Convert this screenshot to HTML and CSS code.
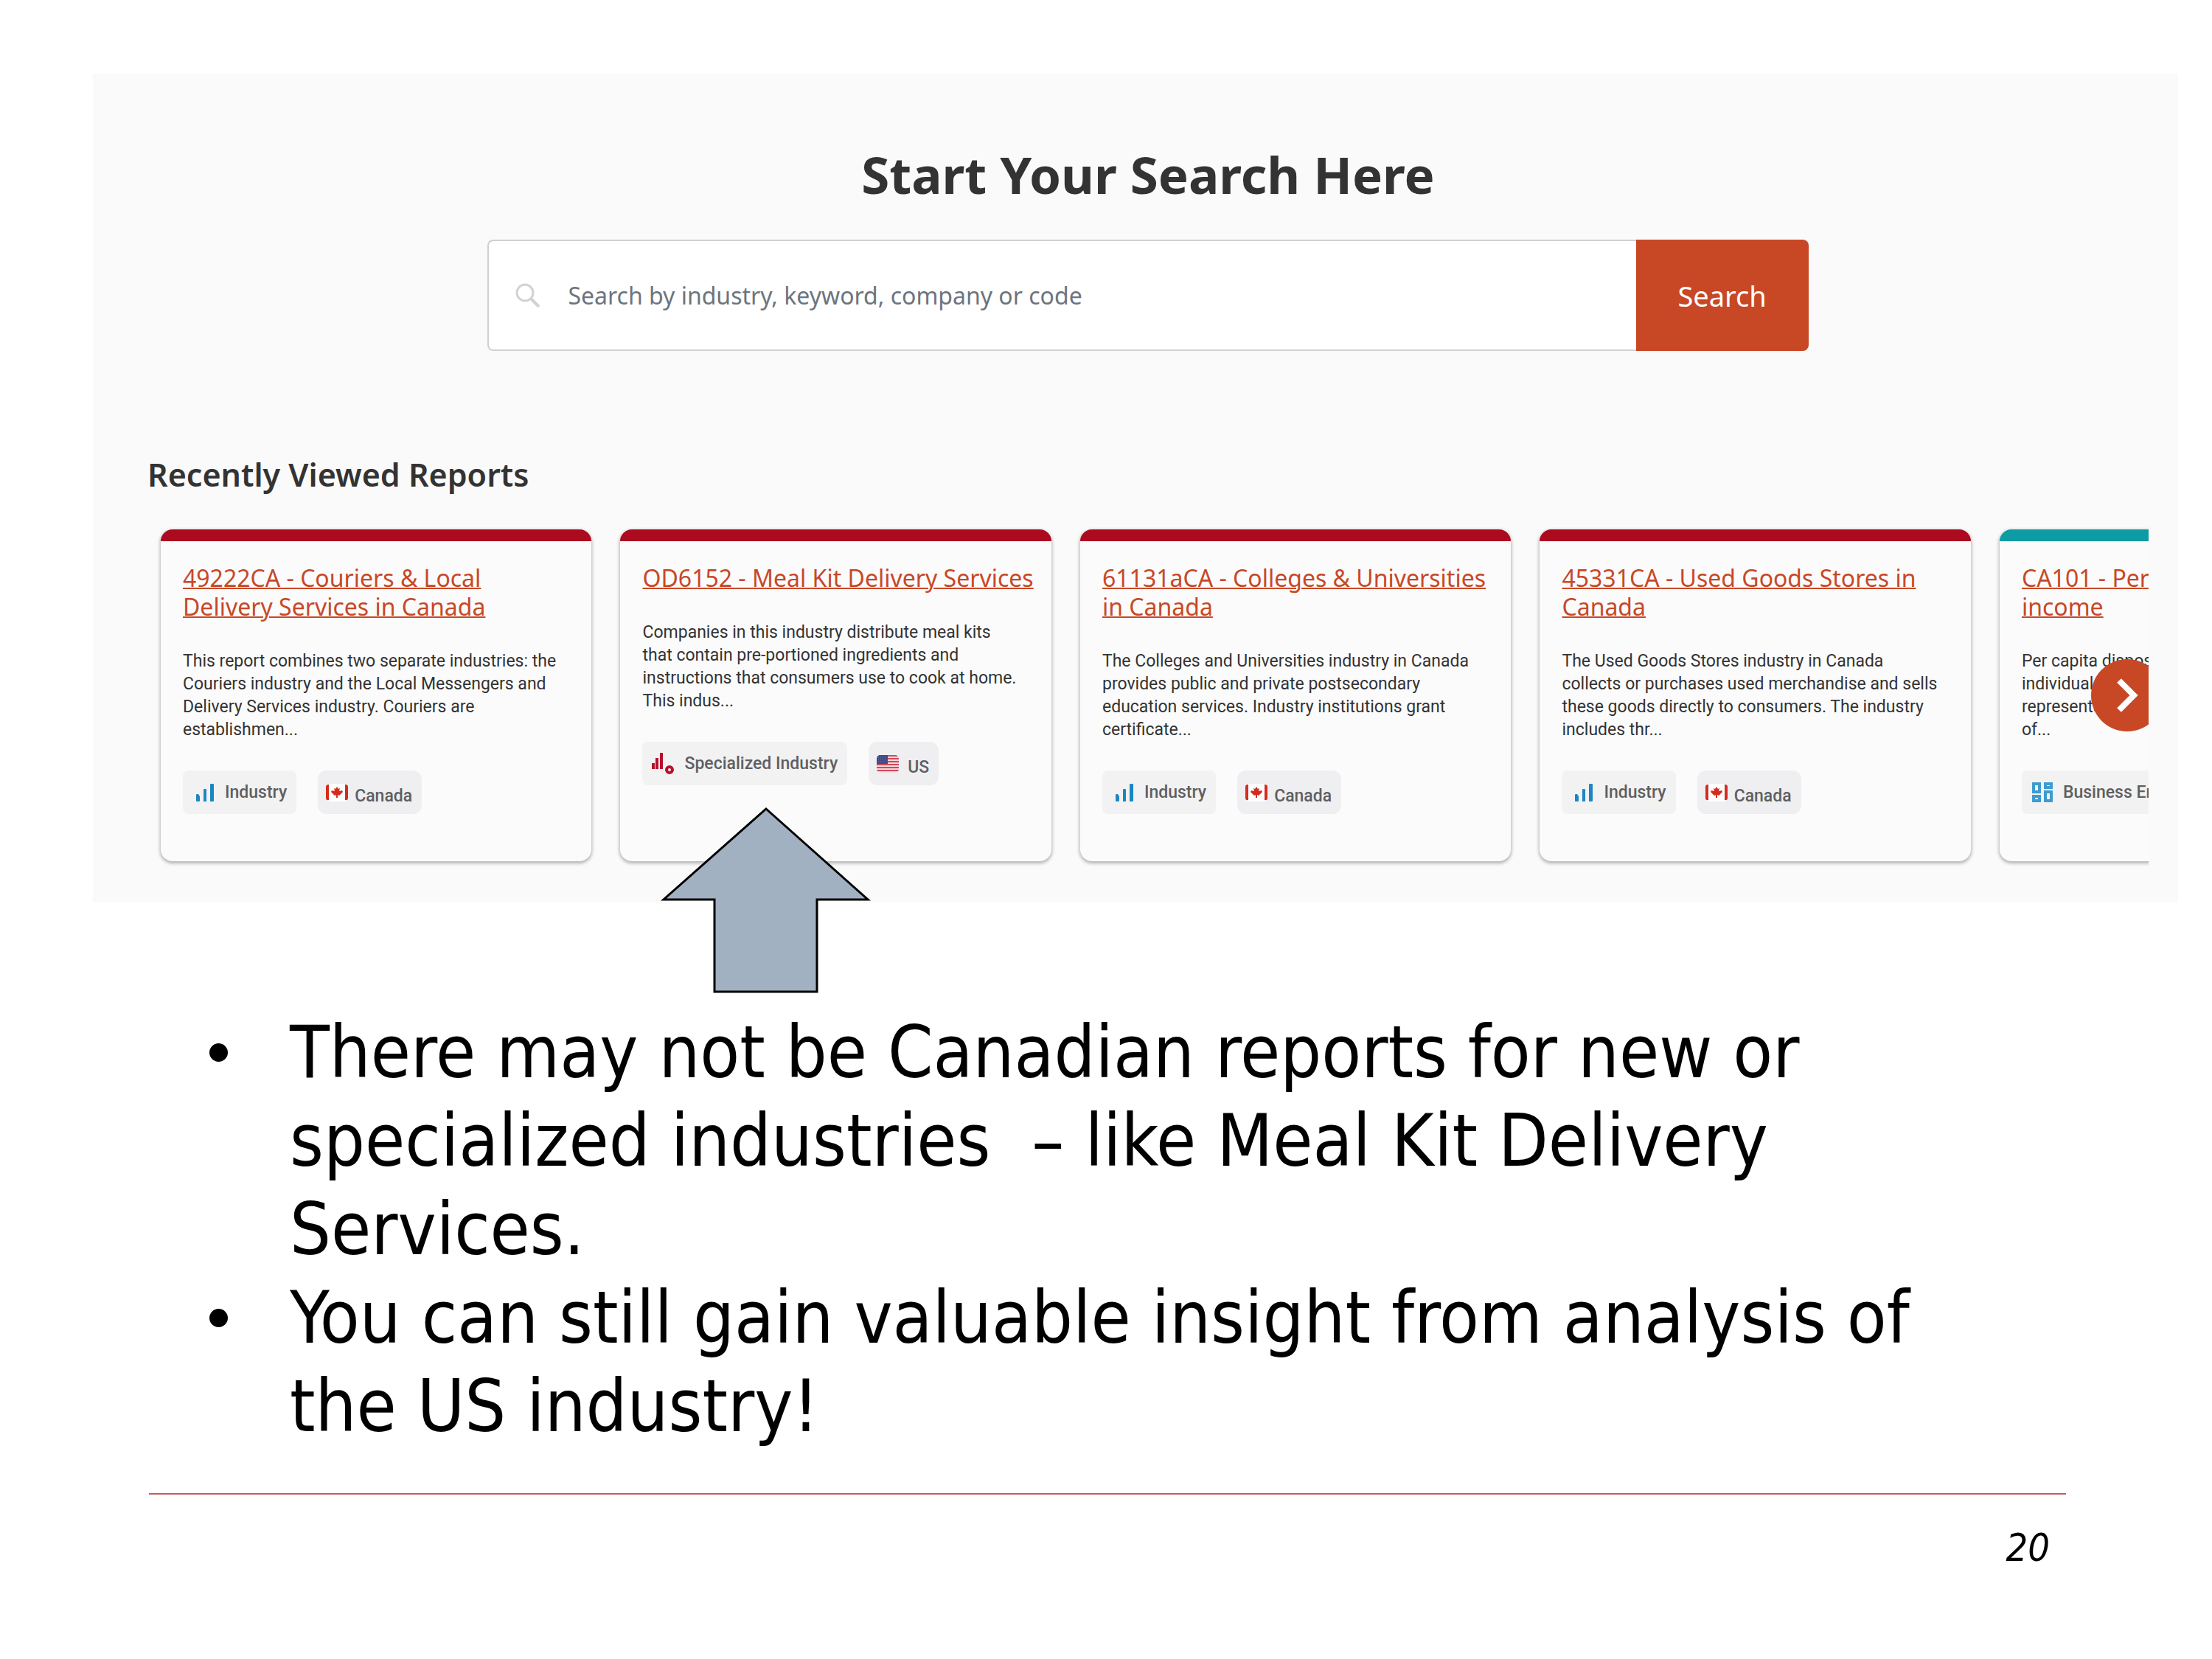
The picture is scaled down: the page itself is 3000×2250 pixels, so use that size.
FILE: index.html
```html
<!DOCTYPE html>
<html lang="en">
<head>
<meta charset="utf-8">
<title>Start Your Search Here</title>
<link rel="stylesheet" href="styles.css">
</head>
<body>
<svg class="defs" aria-hidden="true">
  <symbol id="bars" viewBox="0 0 24 24"><path d="M0 15q0-1 1-1h2l2 3v6q0 1-1 1H1q-1 0-1-1zM10 8q0-1 1-1h2q1 0 1 1v16h-4zM19 1q0-1 1-1h3q1 0 1 1v22q0 1-1 1h-4z" fill="#1c86c4"/></symbol>
  <symbol id="special" viewBox="0 0 32 30"><path d="M0 14h4v8H0zM5 7h4v15H5zM11 0h4v22h-4z" fill="#b8102c"/><circle cx="24" cy="23" r="4" fill="none" stroke="#b8102c" stroke-width="4"/></symbol>
  <symbol id="blocks" viewBox="0 0 28 28"><path d="M2 2h8v11H2zM18 2h8v5h-8zM2 19h8v6H2zM18 13h8v12h-8z" fill="none" stroke="#3d9bd1" stroke-width="4"/></symbol>
  <symbol id="ca" viewBox="0 0 30 24"><rect x="4" width="22" height="24" fill="#fff"/><path d="M4 1v21H2Q0 22 0 19V4Q0 1 4 1zM26 1v21h2q2 0 2-3V4q0-3-4-3zM15 4l2 3 2-1-1 4 4-1 1 2-5 5-2-1v4h-2v-4l-2 1-5-5 1-2 4 1-1-4 2 1z" fill="#d52b1e"/></symbol>
  <symbol id="us" viewBox="0 0 30 24"><clipPath id="usclip"><rect width="30" height="24" rx="5"/></clipPath><g clip-path="url(#usclip)"><path d="M0 0h30v24H0z" fill="#f3d9dd"/><path d="M0 1h30M0 5h30M0 9h30M0 13h30M0 17h30M0 21h30" stroke="#cf4a5b" stroke-width="2"/><path d="M0 0h15v12H0z" fill="#414b85"/><path d="M2 3h12M2 6h12M2 9h12" stroke="#6f76a8" stroke-dasharray="1 2"/></g></symbol>
</svg>
<main class="slide">
  <section class="panel">
    <h1 class="panel-title">Start Your Search Here</h1>
    <form class="search" role="search">
      <div class="search-field">
        <svg class="search-icon" viewBox="0 0 34 34" aria-hidden="true"><circle cx="13" cy="13" r="11" fill="none" stroke="#d2d2d2" stroke-width="3"/><path d="M21 21l11 11" stroke="#d2d2d2" stroke-width="4"/></svg>
        <input class="search-input" type="text" aria-label="Search" placeholder="Search by industry, keyword, company or code">
      </div>
      <button class="search-button" type="submit">Search</button>
    </form>
    <h2 class="recent-title">Recently Viewed Reports</h2>
    <div class="carousel">
      <div class="cards">
        <article class="card">
          <h3 class="card-title"><a href="#">49222CA - Couriers &amp; Local Delivery Services in Canada</a></h3>
          <p class="card-text">This report combines two separate industries: the Couriers industry and the Local Messengers and Delivery Services industry. Couriers are establishmen...</p>
          <div class="tags"><span class="tag"><svg class="icon-bars"><use href="#bars"/></svg>Industry</span><span class="tag region"><svg class="icon-flag"><use href="#ca"/></svg><span class="region-name">Canada</span></span></div>
        </article>
        <article class="card">
          <h3 class="card-title"><a href="#">OD6152 - Meal Kit Delivery Services</a></h3>
          <p class="card-text">Companies in this industry distribute meal kits that contain pre-portioned ingredients and instructions that consumers use to cook at home. This indus...</p>
          <div class="tags"><span class="tag special"><svg class="icon-special"><use href="#special"/></svg>Specialized Industry</span><span class="tag region us"><svg class="icon-flag"><use href="#us"/></svg><span class="region-name">US</span></span></div>
        </article>
        <article class="card">
          <h3 class="card-title"><a href="#">61131aCA - Colleges &amp; Universities in Canada</a></h3>
          <p class="card-text">The Colleges and Universities industry in Canada provides public and private postsecondary education services. Industry institutions grant certificate...</p>
          <div class="tags"><span class="tag"><svg class="icon-bars"><use href="#bars"/></svg>Industry</span><span class="tag region"><svg class="icon-flag"><use href="#ca"/></svg><span class="region-name">Canada</span></span></div>
        </article>
        <article class="card">
          <h3 class="card-title"><a href="#">45331CA - Used Goods Stores in Canada</a></h3>
          <p class="card-text">The Used Goods Stores industry in Canada collects or purchases used merchandise and sells these goods directly to consumers. The industry includes thr...</p>
          <div class="tags"><span class="tag"><svg class="icon-bars"><use href="#bars"/></svg>Industry</span><span class="tag region"><svg class="icon-flag"><use href="#ca"/></svg><span class="region-name">Canada</span></span></div>
        </article>
        <article class="card teal">
          <h3 class="card-title"><a href="#">CA101 - Per capita disposable<br>income</a></h3>
          <p class="card-text">Per capita disposable income<br>individuals<br>represents<br>of...</p>
          <div class="tags"><span class="tag"><svg class="icon-blocks"><use href="#blocks"/></svg>Business Environment</span></div>
        </article>
      </div>
      <button class="next" type="button" aria-label="Next reports"><svg class="next-icon" viewBox="0 0 30 48"><path d="M4 4l20 20L4 44" fill="none" stroke="#fff" stroke-width="8"/></svg></button>
    </div>
    <svg class="pointer" viewBox="0 0 286 254" aria-hidden="true"><path d="M143 3L281 126H212V251H73V126H4z" fill="#a2b1c1" stroke="#000" stroke-width="3"/></svg>
  </section>
  <ul class="notes">
    <li>There may not be Canadian reports for new or specialized industries &nbsp;– like Meal Kit Delivery Services.</li>
    <li>You can still gain valuable insight from analysis of the US industry!</li>
  </ul>
  <footer class="footer">20</footer>
</main>
</body>
</html>
```
FILE: styles.css
```css
* { box-sizing: border-box; }
body { margin: 0; background: #fff; }
.defs { position: absolute; width: 0; height: 0; }
.slide { padding: 100px 46px 0 126px; }

.panel {
  position: relative;
  padding: 88px 40px 40px 74px;
  background: #fafafa;
  color: #333;
  font-family: "Noto Sans", sans-serif;
}
.panel-title { margin: 0; font-size: 69px; line-height: 96px; text-align: center; }

.search { display: flex; width: 66%; height: 151px; margin: 41px auto 0; }
.search-field {
  flex: 1;
  display: flex;
  align-items: center;
  gap: 37px;
  padding-left: 36px;
  background: #fff;
  border: 2px solid #d0d0d4;
  border-right: 0;
  border-radius: 8px 0 0 8px;
}
.search-icon { width: 34px; height: 34px; }
.search-input {
  flex: 1;
  padding: 0;
  border: 0;
  background: none;
  color: #333;
  font: 32px "Noto Sans", sans-serif;
}
.search-input::placeholder { color: #6c757d; opacity: 1; }
.search-button {
  width: 234px;
  border: 0;
  border-radius: 0 8px 8px 0;
  background: #c84826;
  color: #fff;
  font: 38px "Noto Sans", sans-serif;
}

.recent-title { margin: 136px 0 0; font-size: 43px; font-weight: 600; line-height: 64px; }

.carousel { position: relative; overflow: hidden; padding: 42px 0 16px 18px; }
.cards {
  display: grid;
  grid-auto-flow: column;
  grid-auto-columns: 21.68%;
  gap: 39px;
}
.card {
  height: 450px;
  padding: 30px 22px 0 30px;
  border-top: 16px solid #ab0a1f;
  border-radius: 16px;
  background: #fbfbfb;
  box-shadow: 0 2px 4px 1px #b4b4b4;
}
.card.teal { border-top-color: #0d9ba4; }
.card-title { margin: 0; font-size: 32px; font-weight: 400; line-height: 39px; }
.card-title a { color: #c84826; text-decoration-thickness: 2px; }
.card-text { margin: 39px 0 0; padding-right: 18px; font: 23px/31px Roboto, sans-serif; }
.tags { display: flex; gap: 29px; margin-top: 40px; }
.tag {
  display: flex;
  align-items: center;
  gap: 15px;
  height: 59px;
  padding: 0 13px 0 18px;
  border-radius: 8px;
  background: #f2f2f2;
  color: #5f5f61;
  font: 500 23px/28px Roboto, sans-serif;
  white-space: nowrap;
}
.tag.special { padding-left: 13px; gap: 12px; }
.tag.region { gap: 9px; padding-left: 11px; border-radius: 12px; background: #efeff1; }
.tag.us { gap: 12px; }
.teal .tag { padding-left: 14px; gap: 14px; }
.region-name { padding-top: 10px; }
.icon-bars { width: 24px; height: 24px; }
.icon-special { width: 32px; height: 30px; }
.icon-blocks { width: 28px; height: 28px; }
.icon-flag { width: 30px; height: 24px; }

.next {
  position: absolute;
  right: -20px;
  top: 218px;
  width: 98px;
  height: 98px;
  padding: 0;
  border: 0;
  border-radius: 50%;
  background: #c84826;
}
.next-icon { width: 30px; height: 48px; vertical-align: middle; }

.pointer { position: absolute; left: 770px; top: 994px; width: 286px; height: 254px; }

.notes {
  margin: 143px 200px 0 0;
  padding: 0 0 0 267px;
  list-style: none;
  color: #000;
  font: 98px/120px "DejaVu Sans Condensed", "DejaVu Sans", sans-serif;
}
.notes li { position: relative; }
.notes li::before {
  content: "";
  position: absolute;
  left: -109px;
  top: 48px;
  width: 25px;
  height: 25px;
  border-radius: 50%;
  background: #000;
}
.footer {
  margin: 58px 152px 0 76px;
  padding: 42px 22px 0 0;
  border-top: 2px solid #c55a5a;
  text-align: right;
  font: italic 52px/60px "DejaVu Sans Condensed", "DejaVu Sans", sans-serif;
}
```
